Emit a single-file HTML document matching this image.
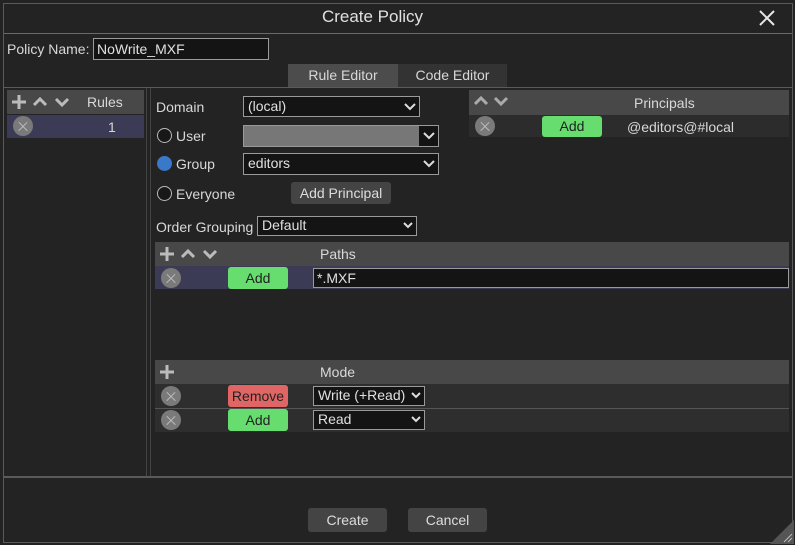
<!DOCTYPE html>
<html><head><meta charset="utf-8"><style>
*{box-sizing:border-box;margin:0;padding:0}
body{width:795px;height:545px;background:#232323;font-family:"Liberation Sans",sans-serif;font-size:14px;color:#d8d8d8;position:relative;overflow:hidden}
.a{position:absolute}
.t{position:absolute;white-space:nowrap;line-height:16px}
.sel{position:absolute;background:#141414;border:1px solid #9a9a9a;color:#e0e0e0;padding-left:4px;line-height:18px;font-size:14px}
.sel svg{position:absolute;right:3px;top:50%;margin-top:-4px}
.hdr{position:absolute;background:#484848}
.xc{position:absolute;width:20px;height:20px;border-radius:50%;background:#7a7a7a}
.xc:before,.xc:after{content:"";position:absolute;left:4px;top:9.5px;width:12px;height:1.3px;background:#bbb;transform:rotate(45deg)}
.xc:after{transform:rotate(-45deg)}
.btn{position:absolute;border-radius:3px;text-align:center;color:#222;font-size:14px}
.g{background:#66dd6e}
.r{background:#e06666}
.gb{background:#444;color:#ddd;border-radius:3px;position:absolute;text-align:center}
.rad{position:absolute;width:15px;height:15px;border-radius:50%;border:1px solid #bbb;background:#181818}
</style></head><body>
<div class="a" style="left:3px;top:3px;width:790px;height:540px;border:1px solid #5a5a5a"></div>
<div class="a" style="left:4px;top:33px;width:788px;height:1px;background:#6a6a6a"></div>
<div class="t" style="left:0;width:745px;text-align:center;top:9px;font-size:17px;color:#e0e0e0">Create Policy</div>
<svg class="a" style="left:759px;top:10px" width="16" height="16"><path d="M1 1L15 15M15 1L1 15" stroke="#e8e8e8" stroke-width="2"/></svg>

<div class="t" style="left:7px;top:41px">Policy Name:</div>
<div class="a" style="left:93px;top:38px;width:176px;height:22px;background:#141414;border:1px solid #9a9a9a;padding-left:3px;line-height:20px;color:#e0e0e0">NoWrite_MXF</div>

<div class="a" style="left:288px;top:64px;width:110px;height:24px;background:#4c4c4c;text-align:center;line-height:22px">Rule Editor</div>
<div class="a" style="left:398px;top:64px;width:109px;height:24px;background:#333;text-align:center;line-height:22px">Code Editor</div>

<div class="a" style="left:4px;top:87px;width:788px;height:1px;background:#5a5a5a"></div>
<div class="a" style="left:4px;top:476px;width:788px;height:2px;background:#5a5a5a"></div>
<div class="a" style="left:146px;top:88px;width:1px;height:388px;background:#444"></div>
<div class="a" style="left:150px;top:88px;width:1px;height:388px;background:#444"></div>

<div class="hdr" style="left:7px;top:90px;width:137px;height:24px"></div>
<svg class="a" style="left:12px;top:95px" width="60" height="14"><path d="M7 0V14M0 7H14" stroke="#bbb" stroke-width="3"/><path d="M22 10L28 4L34 10M44 4L50 10L56 4" stroke="#bbb" stroke-width="3" fill="none"/></svg>
<div class="t" style="left:87px;top:94px">Rules</div>
<div class="a" style="left:7px;top:115px;width:137px;height:23px;background:#3c3b55"></div>
<div class="xc" style="left:13px;top:116px"></div>
<div class="t" style="left:108px;top:119px">1</div>

<div class="t" style="left:156px;top:99px">Domain</div>
<div class="sel" style="left:243px;top:96px;width:177px;height:21px">(local)<svg width="12" height="8"><path d="M1 1L6 6L11 1" stroke="#ddd" stroke-width="2" fill="none"/></svg></div>
<div class="rad" style="left:157px;top:128px"></div>
<div class="t" style="left:176px;top:128px">User</div>
<div class="sel" style="left:243px;top:125px;width:196px;height:22px;background:#777"><div class="a" style="right:0;top:0;width:19px;height:20px;background:#141414"></div><svg width="12" height="8"><path d="M1 1L6 6L11 1" stroke="#ddd" stroke-width="2" fill="none"/></svg></div>
<div class="rad" style="left:157px;top:156px;background:#3a78c9;border-color:#3a78c9"></div>
<div class="t" style="left:176px;top:156px">Group</div>
<div class="sel" style="left:243px;top:153px;width:196px;height:22px">editors<svg width="12" height="8"><path d="M1 1L6 6L11 1" stroke="#ddd" stroke-width="2" fill="none"/></svg></div>
<div class="rad" style="left:157px;top:186px"></div>
<div class="t" style="left:176px;top:186px">Everyone</div>
<div class="gb" style="left:291px;top:182px;width:100px;height:22px;line-height:22px">Add Principal</div>

<div class="t" style="left:156px;top:219px">Order Grouping</div>
<div class="sel" style="left:257px;top:216px;width:160px;height:20px;line-height:17px">Default<svg width="10" height="7"><path d="M1 1L5 5L9 1" stroke="#ddd" stroke-width="2" fill="none"/></svg></div>

<div class="hdr" style="left:469px;top:90px;width:320px;height:25px"></div>
<svg class="a" style="left:474px;top:96px" width="40" height="10"><path d="M1 8L7 2L13 8M21 2L27 8L33 2" stroke="#aaa" stroke-width="3" fill="none"/></svg>
<div class="t" style="left:634px;top:95px">Principals</div>
<div class="a" style="left:469px;top:115px;width:320px;height:22px;background:#2c2c2c"></div>
<div class="xc" style="left:475px;top:116px"></div>
<div class="btn g" style="left:542px;top:116px;width:60px;height:21px;line-height:21px">Add</div>
<div class="t" style="left:627px;top:119px">@editors@#local</div>

<div class="hdr" style="left:155px;top:242px;width:634px;height:24px"></div>
<svg class="a" style="left:160px;top:247px" width="60" height="14"><path d="M7 0V14M0 7H14" stroke="#bbb" stroke-width="3"/><path d="M22 10L28 4L34 10M44 4L50 10L56 4" stroke="#bbb" stroke-width="3" fill="none"/></svg>
<div class="t" style="left:320px;top:246px">Paths</div>
<div class="a" style="left:155px;top:266px;width:634px;height:23px;background:#3c3b55"></div>
<div class="xc" style="left:161px;top:268px"></div>
<div class="btn g" style="left:228px;top:267px;width:60px;height:22px;line-height:22px">Add</div>
<div class="a" style="left:313px;top:268px;width:476px;height:20px;background:#141414;border:1px solid #9a9a9a;padding-left:3px;line-height:18px;color:#e0e0e0">*.MXF</div>

<div class="hdr" style="left:155px;top:360px;width:634px;height:24px"></div>
<svg class="a" style="left:160px;top:365px" width="16" height="14"><path d="M7 0V14M0 7H14" stroke="#bbb" stroke-width="3"/></svg>
<div class="t" style="left:320px;top:364px">Mode</div>
<div class="a" style="left:155px;top:384px;width:634px;height:24px;background:#2e2e2e"></div>
<div class="a" style="left:155px;top:408px;width:634px;height:1px;background:#555"></div>
<div class="a" style="left:155px;top:409px;width:634px;height:23px;background:#2e2e2e"></div>
<div class="xc" style="left:161px;top:386px"></div>
<div class="btn r" style="left:228px;top:385px;width:60px;height:22px;line-height:22px">Remove</div>
<div class="sel" style="left:313px;top:386px;width:112px;height:20px;line-height:17px">Write (+Read)<svg width="10" height="7"><path d="M1 1L5 5L9 1" stroke="#ddd" stroke-width="2" fill="none"/></svg></div>
<div class="xc" style="left:161px;top:410px"></div>
<div class="btn g" style="left:228px;top:409px;width:60px;height:22px;line-height:22px">Add</div>
<div class="sel" style="left:313px;top:410px;width:112px;height:20px;line-height:17px">Read<svg width="10" height="7"><path d="M1 1L5 5L9 1" stroke="#ddd" stroke-width="2" fill="none"/></svg></div>

<div class="gb" style="left:308px;top:508px;width:79px;height:24px;line-height:24px">Create</div>
<div class="gb" style="left:408px;top:508px;width:79px;height:24px;line-height:24px">Cancel</div>
<svg class="a" style="left:770px;top:520px" width="24" height="24"><path d="M24 0L24 24L0 24Z" fill="#555"/><path d="M14 22L22 14M18 22L22 18" stroke="#bbb" stroke-width="1"/></svg>
</body></html>
